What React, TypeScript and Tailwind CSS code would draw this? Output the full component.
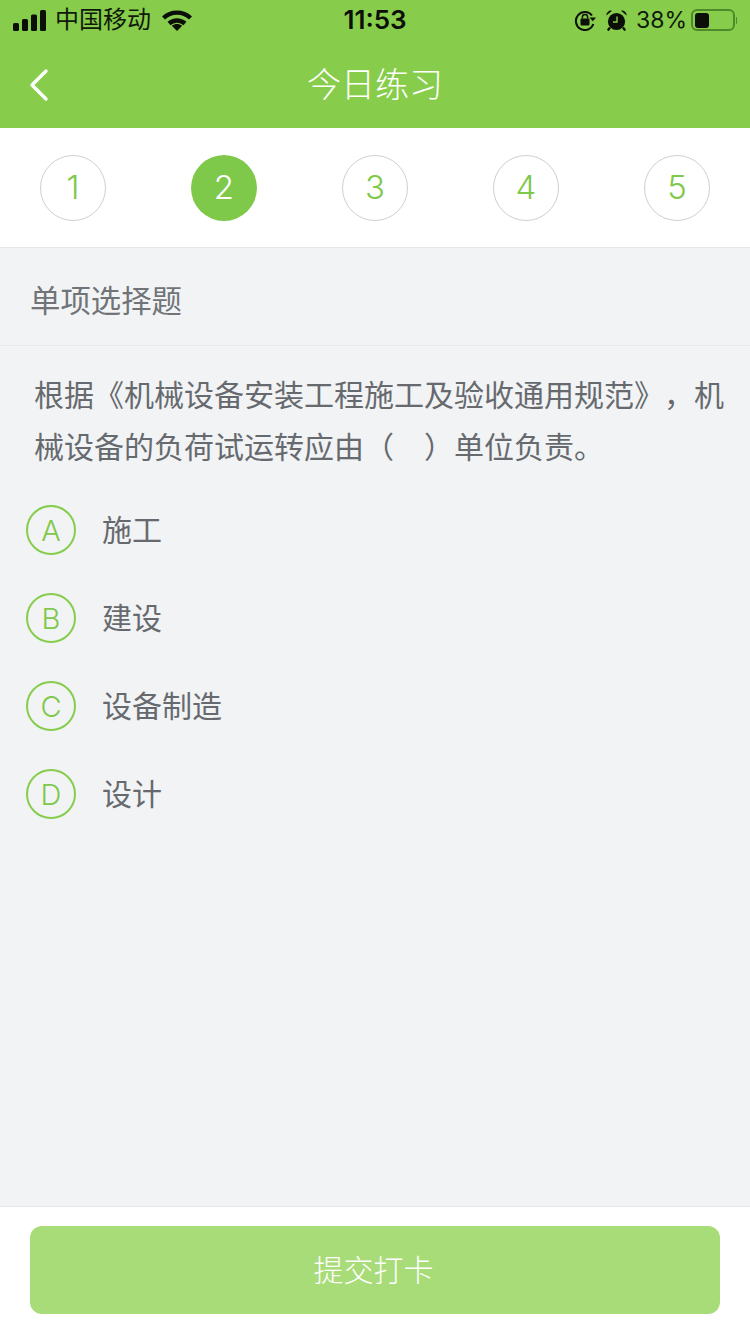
const FONT = "font-['Liberation_Sans','Noto_Sans_CJK_SC',sans-serif]";
const LATIN = "font-['Inter','Noto_Sans_CJK_SC',sans-serif]";

const STEPS = [1, 2, 3, 4, 5];
const ACTIVE_STEP = 2;

const OPTIONS = [
  { key: "A", label: "施工" },
  { key: "B", label: "建设" },
  { key: "C", label: "设备制造" },
  { key: "D", label: "设计" },
];

function SignalIcon() {
  return (
    <svg width="33" height="21" viewBox="0 0 33 21" fill="#0b0f08">
      <rect x="0" y="13" width="6" height="8" rx="1.5" />
      <rect x="9" y="9" width="6" height="12" rx="1.5" />
      <rect x="18" y="4.5" width="6" height="16.5" rx="1.5" />
      <rect x="27" y="0" width="6" height="21" rx="1.5" />
    </svg>
  );
}

function WifiIcon() {
  return (
    <svg width="30" height="21" viewBox="0 0 30 21" fill="none" stroke="#0b0f08" strokeWidth="4.4">
      <path d="M1.5 8C9 0.8 21 0.8 28.5 8" />
      <path d="M7 13.5C11.6 9.4 18.4 9.4 23 13.5" />
      <path d="M15 21L9.8 15.8C13 13.5 17 13.5 20.2 15.8Z" fill="#0b0f08" stroke="none" />
    </svg>
  );
}

function RotationLockIcon() {
  return (
    <svg width="22" height="22" viewBox="0 0 22 22" fill="none" stroke="#0b0f08" strokeWidth="2">
      <path d="M18 6.5A9 9 0 1 0 19.4 15" />
      <path d="M15.5 8.5h6.5l-3.2 3.8z" fill="#0b0f08" stroke="none" />
      <rect x="6.5" y="9.5" width="9" height="7" rx="1" fill="#0b0f08" stroke="none" />
      <path d="M8.4 9.5V8a2.6 2.6 0 0 1 5.2 0v1.5" strokeWidth="1.5" />
    </svg>
  );
}

function AlarmIcon() {
  return (
    <svg width="21" height="21" viewBox="0 0 21 21">
      <circle cx="10.5" cy="11.5" r="8.6" fill="#0b0f08" />
      <path d="M0.4 5.4A4.4 4.4 0 0 1 6 0.8zM20.6 5.4A4.4 4.4 0 0 0 15 0.8z" fill="#0b0f08" />
      <path d="M4 17.5l-2.2 3M17 17.5l2.2 3" stroke="#0b0f08" strokeWidth="2.2" />
      <path d="M11 6.5v5.5H7" fill="none" stroke="#87cd4b" strokeWidth="1.4" />
    </svg>
  );
}

function BatteryIcon() {
  return (
    <div className="flex items-center">
      <div className="flex h-[22px] w-[44px] items-center rounded-[6px] border-2 border-[#4f8a2a] px-[2px]">
        <div className="h-[15px] w-[14px] rounded-[3px] bg-[#0b0f08]" />
      </div>
      <div className="ml-[1px] h-[7px] w-[1px] rounded-r-full bg-[#4f8a2a]" />
    </div>
  );
}

export default function App() {
  return (
    <div className={`flex h-[1334px] w-[750px] flex-col overflow-hidden bg-[#f2f3f5] ${FONT}`}>
      <div className="bg-[#87cd4b]">
        <div className="grid h-[40px] grid-cols-3 items-center pl-[13px] pr-[13px]">
          <div className="flex items-center">
            <SignalIcon />
            <span className="ml-[9px] text-[24px] leading-none text-[#0f1a0a]">中国移动</span>
            <span className="ml-[11px]"><WifiIcon /></span>
          </div>
          <div className={`text-center text-[26px] font-semibold leading-none text-[#0b0f08] ${LATIN}`}>11:53</div>
          <div className="flex items-center justify-end">
            <RotationLockIcon />
            <span className="ml-[10px]"><AlarmIcon /></span>
            <span className={`ml-[9px] text-[23px] leading-none text-[#0f1a0a] ${LATIN}`}>38%</span>
            <span className="ml-[4px]"><BatteryIcon /></span>
          </div>
        </div>
        <div className="grid h-[88px] grid-cols-3 items-center pt-[2px]">
          <div className="pl-[28px]">
            <svg width="22" height="34" viewBox="0 0 22 34" fill="none" stroke="#fff" strokeWidth="3.4" strokeLinecap="round" strokeLinejoin="round">
              <path d="M18 3L4 17l14 14" />
            </svg>
          </div>
          <div className="whitespace-nowrap text-center text-[34px] font-light leading-none text-white">今日练习</div>
        </div>
      </div>

      <div className="flex h-[120px] items-center justify-between border-b border-[#e6e7e9] bg-white px-[40px]">
        {STEPS.map((step) => (
          <div
            key={step}
            className={
              step === ACTIVE_STEP
                ? `flex h-[66px] w-[66px] items-center justify-center rounded-full bg-[#7ec84a] text-[33px] font-[350] text-white ${LATIN}`
                : `flex h-[66px] w-[66px] items-center justify-center rounded-full border border-[#cfcfcf] text-[33px] font-[350] text-[#7ec84a] ${LATIN}`
            }
          >
            {step}
          </div>
        ))}
      </div>

      <div className="flex h-[98px] items-center border-b border-[#e6e7e9] px-[30px] pt-[10px] text-[30.4px] text-[#707478]">
        单项选择题
      </div>

      <div className="flex-1">
        <p className="mt-[24px] pl-[34px] pr-[25px] text-[30px] leading-[52px] text-[#666a6e] [text-spacing-trim:space-all]">
          根据《机械设备安装工程施工及验收通用规范》，机械设备的负荷试运转应由（　）单位负责。
        </p>
        <div className="mt-[31px] flex flex-col gap-[38px] pl-[26px]">
          {OPTIONS.map((option) => (
            <div key={option.key} className="flex items-center">
              <div className={`flex h-[50px] w-[50px] items-center justify-center rounded-full border-2 border-[#86cd4e] pt-[2px] text-[29px] font-[350] text-[#7ec84a] ${LATIN}`}>
                {option.key}
              </div>
              <span className="ml-[26px] text-[30px] text-[#666a6e]">{option.label}</span>
            </div>
          ))}
        </div>
      </div>

      <div className="h-[128px] border-t border-[#e6e7e9] bg-white px-[30px] pt-[19px]">
        <button className="flex h-[88px] w-full items-center justify-center rounded-[12px] bg-[#a8dc78] pr-[3px] text-[30px] font-light text-white">
          提交打卡
        </button>
      </div>
    </div>
  );
}
